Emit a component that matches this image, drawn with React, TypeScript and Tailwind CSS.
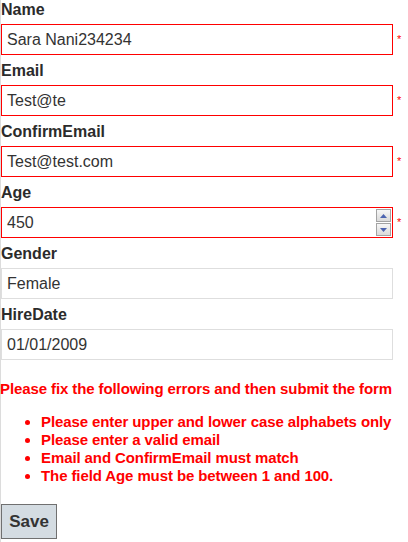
import React from "react";

type Field = {
  label: string;
  value: string;
  error?: boolean;
  spinner?: boolean;
};

const fields: Field[] = [
  { label: "Name", value: "Sara Nani234234", error: true },
  { label: "Email", value: "Test@te", error: true },
  { label: "ConfirmEmail", value: "Test@test.com", error: true },
  { label: "Age", value: "450", error: true, spinner: true },
  { label: "Gender", value: "Female" },
  { label: "HireDate", value: "01/01/2009" },
];

const errors = [
  "Please enter upper and lower case alphabets only",
  "Please enter a valid email",
  "Email and ConfirmEmail must match",
  "The field Age must be between 1 and 100.",
];

function Spinner() {
  return (
    <div className="absolute right-[1px] top-[1px] flex w-[15px] flex-col gap-[1px]">
      {/* up */}
      <div className="flex h-[13px] items-center justify-center border border-[#a3a3a3] bg-gradient-to-b from-[#f7f7f7] to-[#dadada]">
        <svg width="7" height="4" viewBox="0 0 7 4">
          <path d="M0 4 L3.5 0 L7 4 Z" fill="#4d64b0" />
        </svg>
      </div>
      {/* down */}
      <div className="flex h-[13px] items-center justify-center border border-[#a3a3a3] bg-gradient-to-b from-[#f7f7f7] to-[#dadada]">
        <svg width="7" height="4" viewBox="0 0 7 4">
          <path d="M0 0 L7 0 L3.5 4 Z" fill="#4d64b0" />
        </svg>
      </div>
    </div>
  );
}

export default function App() {
  return (
    <div className="min-h-screen border-l border-[#dcdcdc] bg-white font-['Liberation_Sans',Arial,sans-serif] text-[#333]">
      {/* Form fields */}
      {fields.map((f) => (
        <div key={f.label} className="mb-[6px]">
          <div className="h-5 text-base font-bold leading-5 text-[#2b2b2b]">{f.label}</div>
          <div className="mt-1 flex items-start">
            <div
              className={`relative flex h-[31px] w-[392px] items-center border pl-[5px] text-base ${
                f.error ? "border-[#ff0000]" : "border-[#dedede]"
              }`}
            >
              {f.value}
              {f.spinner && <Spinner />}
            </div>
            {f.error && (
              <span className="ml-[4px] mt-[10px] text-[11px] leading-none text-[#ff0000]">*</span>
            )}
          </div>
        </div>
      ))}

      {/* Validation summary */}
      <div className="mt-[20px] text-[15px] font-bold leading-[18px] text-[#ff0000]">
        <div className="-ml-[1px] tracking-[-0.1px]">Please fix the following errors and then submit the form</div>
        <ul className="mt-[15px] list-disc pl-[40px] tracking-[-0.1px]">
          {errors.map((e) => (
            <li key={e}>{e}</li>
          ))}
        </ul>
      </div>

      <button className="mt-[19px] h-[35px] w-[56px] border border-[#707070] bg-[#d4dce2] text-[17px] font-bold text-[#333]">
        Save
      </button>
    </div>
  );
}
